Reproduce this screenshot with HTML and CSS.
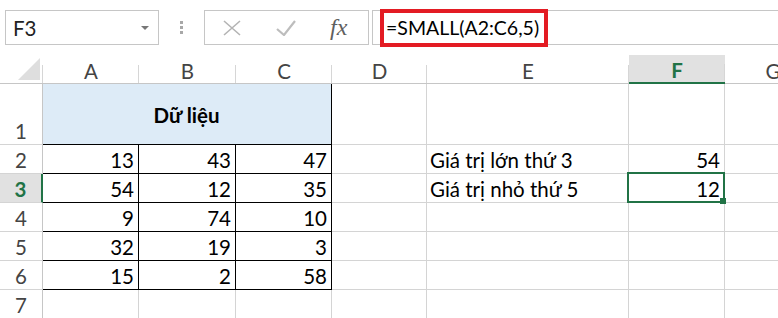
FILE: index.html
```html
<!DOCTYPE html>
<html lang="vi">
<head>
<meta charset="utf-8">
<title>SMALL</title>
<link rel="stylesheet" href="styles.css">
</head>
<body>
<div class="app">
  <div class="toolbar">
    <div class="namebox"><span class="nb-text">F3</span><span class="nb-arrow"></span></div>
    <div class="grip"><i></i><i></i><i></i></div>
    <div class="fbtns">
      <svg class="ico-x" width="18" height="16" viewBox="0 0 18 16"><path d="M1 1 L17 15 M17 1 L1 15" stroke="#b4b4b4" stroke-width="1.6" fill="none"/></svg>
      <svg class="ico-check" width="20" height="16" viewBox="0 0 20 16"><path d="M1 9 L8 15 L19 1" stroke="#bdbdbd" stroke-width="2.2" fill="none"/></svg>
      <span class="fx">fx</span>
    </div>
    <div class="finput"><div class="hl">=SMALL(A2:C6,5)</div></div>
  </div>
  <div class="sheet">
    <div class="hd corner"><svg width="22" height="22" viewBox="0 0 22 22"><polygon points="22,0 22,22 0,22" fill="#dedede"/></svg></div>
    <div class="hd">A</div><div class="hd">B</div><div class="hd">C</div><div class="hd">D</div><div class="hd">E</div><div class="hd sel">F</div><div class="hd">G</div>

    <div class="rh">1</div>
    <div class="c merged">Dữ liệu</div>
    <div class="c"></div><div class="c"></div><div class="c"></div><div class="c"></div>

    <div class="rh">2</div>
    <div class="c num t">13</div><div class="c num t">43</div><div class="c num t">47</div>
    <div class="c"></div><div class="c">Giá trị lớn thứ 3</div><div class="c num">54</div><div class="c"></div>

    <div class="rh sel">3</div>
    <div class="c num t">54</div><div class="c num t">12</div><div class="c num t">35</div>
    <div class="c"></div><div class="c">Giá trị nhỏ thứ 5</div><div class="c num active">12</div><div class="c"></div>

    <div class="rh">4</div>
    <div class="c num t">9</div><div class="c num t">74</div><div class="c num t">10</div>
    <div class="c"></div><div class="c"></div><div class="c"></div><div class="c"></div>

    <div class="rh">5</div>
    <div class="c num t">32</div><div class="c num t">19</div><div class="c num t">3</div>
    <div class="c"></div><div class="c"></div><div class="c"></div><div class="c"></div>

    <div class="rh">6</div>
    <div class="c num t">15</div><div class="c num t">2</div><div class="c num t">58</div>
    <div class="c"></div><div class="c"></div><div class="c"></div><div class="c"></div>

    <div class="rh">7</div>
    <div class="c"></div><div class="c"></div><div class="c"></div>
    <div class="c"></div><div class="c"></div><div class="c"></div><div class="c"></div>
  </div>
</div>
</body>
</html>
```
FILE: styles.css
```css
* { box-sizing: border-box; }
html, body { margin: 0; padding: 0; background: #fff; }
body {
  width: 778px;
  height: 318px;
  overflow: hidden;
  font-family: "Lato", "Open Sans", sans-serif;
  font-size: 20.5px;
  color: #000;
}
.app { width: 778px; overflow: hidden; }

/* formula bar */
.toolbar {
  display: flex;
  align-items: stretch;
  height: 45px;
  padding-top: 10px;
  margin-bottom: 10px;
}
.namebox {
  margin-left: 5px;
  width: 154px;
  border: 1px solid #c6c6c6;
  display: flex;
  align-items: center;
  justify-content: space-between;
  padding: 0 9px 0 7px;
}
.nb-text { color: #222; line-height: 30px; }
.nb-arrow {
  width: 0; height: 0;
  border-left: 4px solid transparent;
  border-right: 4px solid transparent;
  border-top: 4px solid #777;
}
.grip {
  margin-left: 21px;
  width: 3px;
  display: flex;
  flex-direction: column;
  justify-content: center;
  gap: 2px;
}
.grip i { display: block; width: 3px; height: 3px; background: #a8a8a8; }
.fbtns {
  margin-left: 21px;
  width: 165px;
  border: 1px solid #c6c6c6;
  display: flex;
  align-items: center;
  padding-left: 18px;
}
.ico-check { margin-left: 35px; }
.fx {
  margin-left: 34px;
  font-family: "Liberation Serif", serif;
  font-style: italic;
  font-size: 24px;
  color: #5f5f5f;
}
.finput {
  margin-left: 3px;
  flex: 1;
  border: 1px solid #c6c6c6;
  border-right: none;
  padding-left: 7px;
}
.hl {
  margin-top: -2px;
  width: 168px;
  height: 38px;
  border: 4px solid #e31b23;
  padding-left: 2px;
  font-size: 19.5px;
  line-height: 30px;
  white-space: nowrap;
}

/* sheet */
.sheet {
  display: grid;
  grid-template-columns: 43px 96px 97px 96px 95px 202px 96px 96px;
  grid-template-rows: 29px 61px repeat(6, 29px);
  line-height: 24px;
}
.hd {
  display: flex;
  align-items: flex-end;
  justify-content: center;
  border-bottom: 1px solid #c6c6c6;
  color: #444;
  background: linear-gradient(#d6d6d6, #d6d6d6) right bottom / 1px 18px no-repeat;
}
.hd.sel {
  background-color: #e1e1e1;
  border-bottom: 2px solid #217346;
  color: #217346;
  font-weight: bold;
}
.hd.corner { justify-content: flex-end; padding: 0 3px 3px 0; }
.hd.corner svg { display: block; }

.rh {
  display: flex;
  align-items: flex-end;
  justify-content: center;
  border-right: 1px solid #c6c6c6;
  border-bottom: 1px solid #d4d4d4;
  color: #444;
  padding-bottom: 1px;
}
.rh.sel {
  background: #e1e1e1;
  border-right: 2px solid #217346;
  color: #217346;
  font-weight: bold;
}

.c {
  display: flex;
  align-items: flex-end;
  border-right: 1px solid #d4d4d4;
  border-bottom: 1px solid #d4d4d4;
  padding: 0 4px 1px 3px;
  white-space: nowrap;
}
.c.num { justify-content: flex-end; }
.c.t { border-right-color: #000; border-bottom-color: #000; }
.c.merged {
  grid-column: span 3;
  background: #ddebf7;
  justify-content: center;
  align-items: center;
  font-weight: bold;
  border-right-color: #000;
  border-bottom-color: #000;
  padding-top: 3px;
}
.c.active { position: relative; }
.c.active::before {
  content: "";
  position: absolute;
  left: -2px; top: -2px; right: -1px; bottom: -1px;
  border: 2px solid #217346;
}
.c.active::after {
  content: "";
  position: absolute;
  width: 6px; height: 6px;
  right: -2px; bottom: -2px;
  background: #217346;
}
```
